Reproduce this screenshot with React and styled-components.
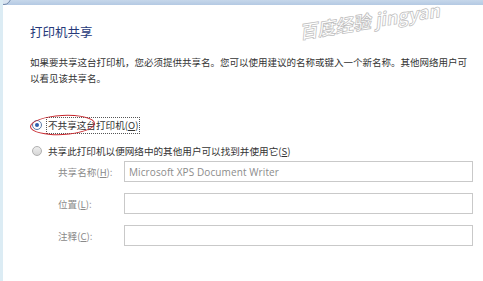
import React from "react";
import styled, { createGlobalStyle } from "styled-components";

const GlobalStyle = createGlobalStyle`
  html, body { margin: 0; padding: 0; background: #ffffff; }
  body { font-family: "Noto Sans CJK SC", "Noto Sans", sans-serif; }
`;

const Window = styled.div`
  position: relative;
  width: 483px;
  height: 281px;
  overflow: hidden;
  background: #ffffff;
  border-left: 3px solid #dcecf4;
  box-sizing: border-box;
`;

const TopBar = styled.div`
  height: 5px;
  background: linear-gradient(#c6d7ea, #b4c9e3);
  position: relative;
`;

const BackCircle = styled.div`
  position: absolute;
  left: -6px;
  top: -9px;
  width: 12px;
  height: 12px;
  border-radius: 50%;
  border: 1px solid #6f86a8;
  background: #d9e4f1;
`;

const Content = styled.div`
  padding-left: 27px;
  padding-right: 6px;
`;

const Title = styled.h1`
  margin: 18px 0 0;
  font-size: 12.5px;
  line-height: 18px;
  font-weight: normal;
  color: #26397a;
`;

const Paragraph = styled.p`
  margin: 13px 0 0;
  font-size: 9.5px;
  line-height: 16px;
  color: #333;
  width: 446px;
`;

const RadioRow = styled.label`
  display: flex;
  align-items: center;
  height: 18px;
  margin-top: ${(p) => p.$mt}px;
  padding-left: 2px;
  font-size: 9.6px;
  color: #333;
  position: relative;
`;

const RadioDot = styled.span`
  width: 8px;
  height: 8px;
  border-radius: 50%;
  border: 1px solid ${(p) => (p.$checked ? "#5d7ba8" : "#b0b0b0")};
  background: ${(p) => (p.$checked ? "#fff" : "linear-gradient(#eee, #d6d6d6)")};
  display: flex;
  align-items: center;
  justify-content: center;
  margin-right: 4px;
  box-sizing: content-box;
  &::after {
    content: "";
    width: 4px;
    height: 4px;
    border-radius: 50%;
    background: ${(p) => (p.$checked ? "#2f5fae" : "transparent")};
  }
`;

const RadioText = styled.span`
  padding: 1px 1px;
  border: 1px ${(p) => (p.$focus ? "dotted #555" : "solid transparent")};
  line-height: 13px;
`;

const Acc = styled.span`
  text-decoration: underline;
`;

const Ellipse = styled.div`
  position: absolute;
  left: 0px;
  top: -1px;
  width: 63px;
  height: 18px;
  border: 1.5px solid #c8282e;
  border-radius: 50%;
  transform: rotate(-3deg);
  pointer-events: none;
`;

const Form = styled.div`
  display: grid;
  grid-template-columns: 66px 349px;
  row-gap: 11px;
  margin-top: 1px;
  padding-left: 28px;
  align-items: center;
`;

const Label = styled.span`
  font-size: 9.6px;
  color: #8a8a8a;
`;

const Field = styled.div`
  height: 21px;
  box-sizing: border-box;
  border: 1px solid #c9c9c9;
  background: #fff;
  display: flex;
  align-items: center;
  padding-left: 4px;
  font-family: "Open Sans", "DejaVu Sans", sans-serif;
  font-size: 10px;
  color: #8c8c8c;
  letter-spacing: 0.1px;
`;

const Watermark = styled.div`
  position: absolute;
  left: 298px;
  top: 20px;
  font-size: 18px;
  line-height: 22px;
  font-weight: bold;
  color: rgba(255, 255, 255, 0.9);
  -webkit-text-stroke: 0.7px #bdbdbd;
  transform: rotate(-9deg);
  transform-origin: left bottom;
  white-space: nowrap;
  font-style: italic;
  pointer-events: none;
`;

export default function App() {
  return (
    <>
      <GlobalStyle />
      <Window>
        <TopBar>
          <BackCircle />
        </TopBar>
        <Content>
          <Title>打印机共享</Title>
          <Paragraph>
            如果要共享这台打印机，您必须提供共享名。您可以使用建议的名称或键入一个新名称。其他网络用户可以看见该共享名。
          </Paragraph>
          <RadioRow $mt={30}>
            <RadioDot $checked />
            <RadioText $focus>
              不共享这台打印机(<Acc>O</Acc>)
            </RadioText>
            <Ellipse />
          </RadioRow>
          <RadioRow $mt={8}>
            <RadioDot />
            <RadioText>
              共享此打印机以便网络中的其他用户可以找到并使用它(<Acc>S</Acc>)
            </RadioText>
          </RadioRow>
          <Form>
            <Label>
              共享名称(<Acc>H</Acc>):
            </Label>
            <Field>Microsoft XPS Document Writer</Field>
            <Label>
              位置(<Acc>L</Acc>):
            </Label>
            <Field />
            <Label>
              注释(<Acc>C</Acc>):
            </Label>
            <Field />
          </Form>
        </Content>
        <Watermark>百度经验 jingyan</Watermark>
      </Window>
    </>
  );
}
